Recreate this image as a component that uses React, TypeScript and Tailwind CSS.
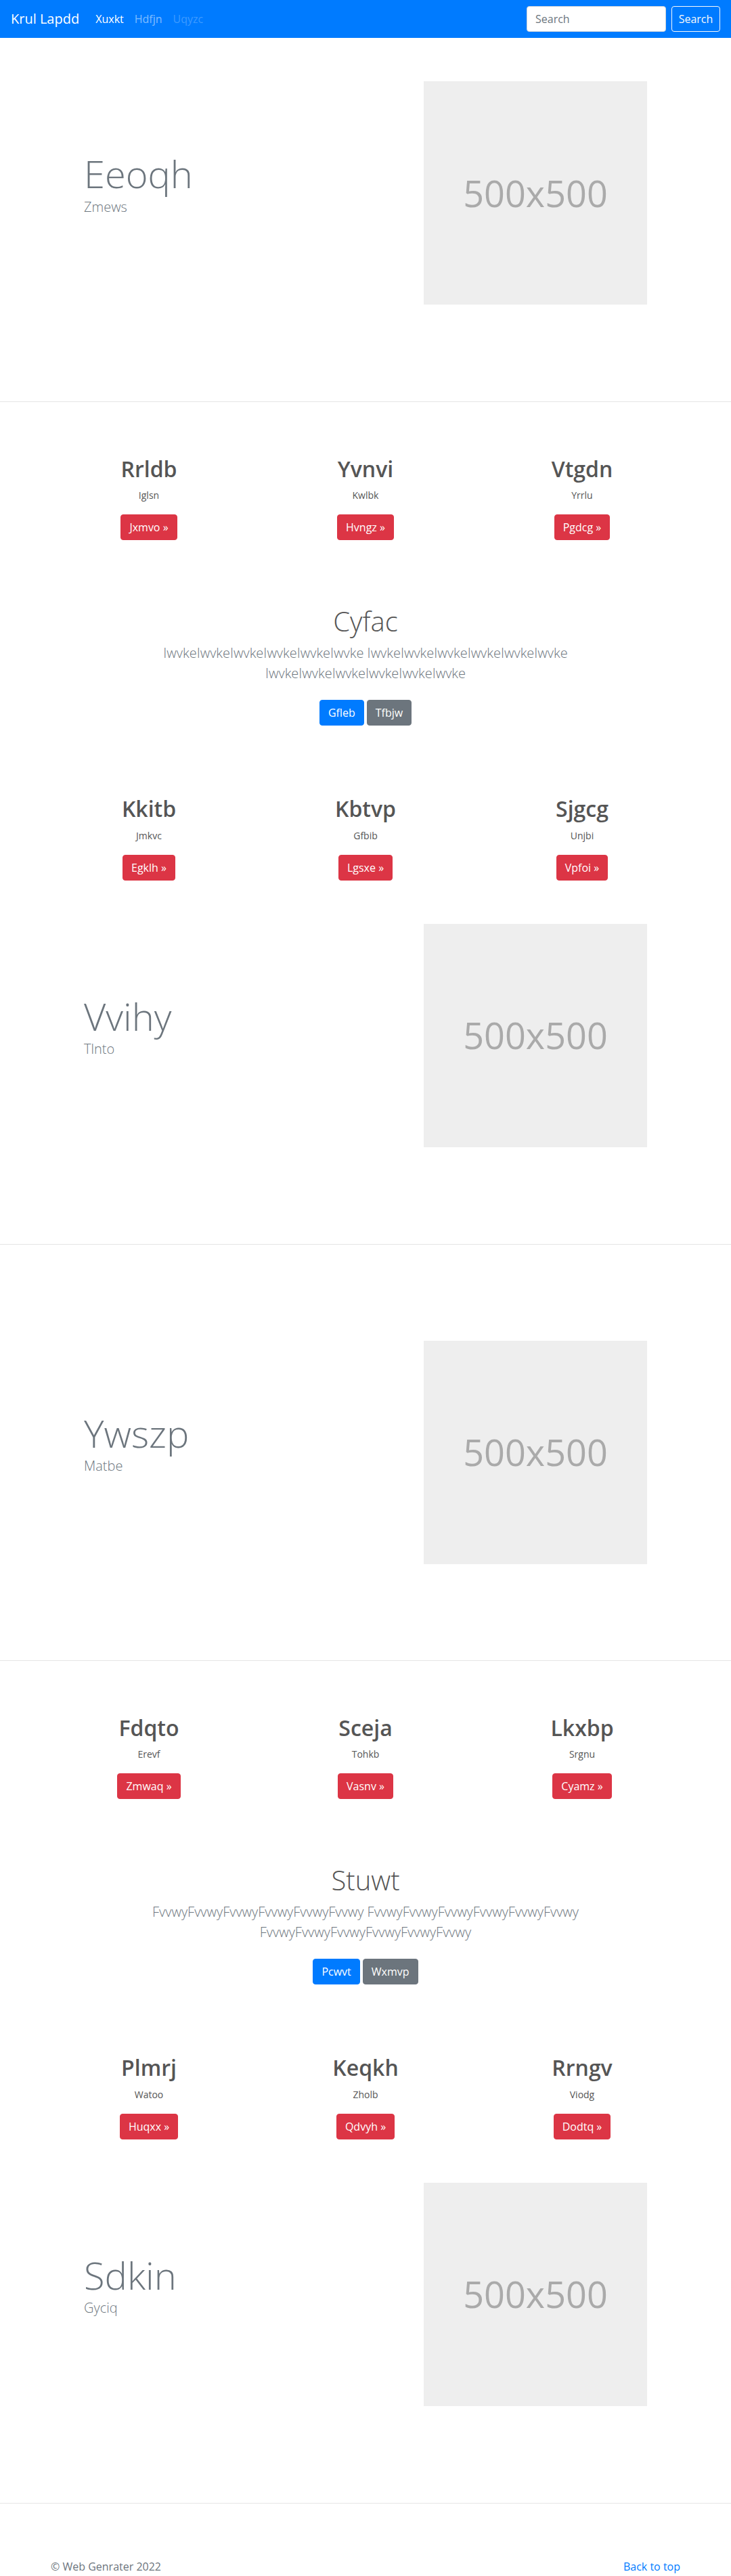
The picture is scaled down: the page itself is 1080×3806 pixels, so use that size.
import { type ReactNode } from "react";

type Col = { title: string; sub: string; btn: string };

const setA: Col[] = [
  { title: "Rrldb", sub: "Iglsn", btn: "Jxmvo" },
  { title: "Yvnvi", sub: "Kwlbk", btn: "Hvngz" },
  { title: "Vtgdn", sub: "Yrrlu", btn: "Pgdcg" },
];
const setB: Col[] = [
  { title: "Kkitb", sub: "Jmkvc", btn: "Egklh" },
  { title: "Kbtvp", sub: "Gfbib", btn: "Lgsxe" },
  { title: "Sjgcg", sub: "Unjbi", btn: "Vpfoi" },
];
const setC: Col[] = [
  { title: "Fdqto", sub: "Erevf", btn: "Zmwaq" },
  { title: "Sceja", sub: "Tohkb", btn: "Vasnv" },
  { title: "Lkxbp", sub: "Srgnu", btn: "Cyamz" },
];
const setD: Col[] = [
  { title: "Plmrj", sub: "Watoo", btn: "Huqxx" },
  { title: "Keqkh", sub: "Zholb", btn: "Qdvyh" },
  { title: "Rrngv", sub: "Viodg", btn: "Dodtq" },
];

function HeroInner({ title, sub }: { title: string; sub: string }) {
  return (
    <div className="mx-auto w-[960px] px-16 grid grid-cols-2 items-center">
      <div className="pb-[26px]">
        <h1 className="text-[56px] font-light leading-[1.2] text-[#6c757d]">{title}</h1>
        <p className="text-xl font-light leading-[1.5] text-[#6c757d]">{sub}</p>
      </div>
      <div className="flex justify-end">
        <div className="w-[330px] h-[330px] bg-[#eeeeee] flex items-center justify-center text-[54px] text-[#aaaaaa]">
          500x500
        </div>
      </div>
    </div>
  );
}

function ThreeCols({ items }: { items: Col[] }) {
  return (
    <div className="mx-auto w-[960px] grid grid-cols-3 text-center">
      {items.map((item) => (
        <div key={item.title}>
          <h2 className="text-[32px] font-semibold leading-[1.2] text-[#555555] mb-[9px]">
            {item.title}
          </h2>
          <p className="text-sm leading-[21px] text-[#555555] mb-[18px]">{item.sub}</p>
          <a className="inline-block bg-[#dc3545] border border-[#dc3545] text-white rounded px-3 py-1.5 text-base leading-6">
            {item.btn} &raquo;
          </a>
        </div>
      ))}
    </div>
  );
}

function Center({ title, word, primary, secondary }: { title: string; word: string; primary: string; secondary: string }) {
  const long = word.repeat(6);
  return (
    <div className="text-center">
      <h1 className="text-[40px] font-light leading-[1.2] text-[#555555] mb-2">{title}</h1>
      <p className="mx-auto max-w-[680px] text-xl font-light leading-[1.5] text-[#6c757d] mb-6">
        {long} {long} {long}
      </p>
      <div className="flex justify-center gap-1">
        <a className="bg-[#007bff] border border-[#007bff] text-white rounded px-3 py-1.5 text-base leading-6">
          {primary}
        </a>
        <a className="bg-[#6c757d] border border-[#6c757d] text-white rounded px-3 py-1.5 text-base leading-6">
          {secondary}
        </a>
      </div>
    </div>
  );
}

function Block({ a, b, center, hero }: { a: Col[]; b: Col[]; center: ReactNode; hero: ReactNode }) {
  return (
    <>
      <div className="pt-20">
        <ThreeCols items={a} />
      </div>
      <div className="mt-24">{center}</div>
      <div className="mt-[104px]">
        <ThreeCols items={b} />
      </div>
      <div className="pt-16 pb-[143px] border-b border-[#e5e5e5]">{hero}</div>
    </>
  );
}

export default function App() {
  return (
    <div className="min-h-screen bg-white font-['Open_Sans','Liberation_Sans',sans-serif] text-[#212529]">
      <nav className="bg-[#007bff] h-14 px-4 flex items-center justify-between">
        <div className="flex items-center">
          <span className="text-xl leading-[30px] text-white mr-4">Krul Lapdd</span>
          <ul className="flex text-base leading-6">
            <li className="px-2 text-white">Xuxkt</li>
            <li className="px-2 text-white/50">Hdfjn</li>
            <li className="px-2 text-white/25">Uqyzc</li>
          </ul>
        </div>
        <div className="flex items-center">
          <input
            className="w-[206px] h-[38px] bg-white rounded border border-[#ced4da] px-3 text-base text-[#495057] placeholder:text-[#6c757d] mr-2 outline-none"
            placeholder="Search"
          />
          <button className="h-[38px] w-[72px] rounded border border-[#f8f9fa] text-[#f8f9fa] text-base">
            Search
          </button>
        </div>
      </nav>

      <section className="pt-16 pb-[143px] border-b border-[#e5e5e5]">
        <HeroInner title="Eeoqh" sub="Zmews" />
      </section>

      <Block
        a={setA}
        b={setB}
        center={<Center title="Cyfac" word="Iwvke" primary="Gfleb" secondary="Tfbjw" />}
        hero={<HeroInner title="Vvihy" sub="Tlnto" />}
      />

      <section className="pt-[142px] pb-[142px] border-b border-[#e5e5e5]">
        <HeroInner title="Ywszp" sub="Matbe" />
      </section>

      <Block
        a={setC}
        b={setD}
        center={<Center title="Stuwt" word="Fvvwy" primary="Pcwvt" secondary="Wxmvp" />}
        hero={<HeroInner title="Sdkin" sub="Gyciq" />}
      />

      <footer className="mx-auto w-[960px] px-[15px] pt-[81px] flex justify-between text-base leading-6">
        <p className="text-[#6c757d]">&copy; Web Genrater 2022</p>
        <a className="text-[#007bff]">Back to top</a>
      </footer>
    </div>
  );
}
